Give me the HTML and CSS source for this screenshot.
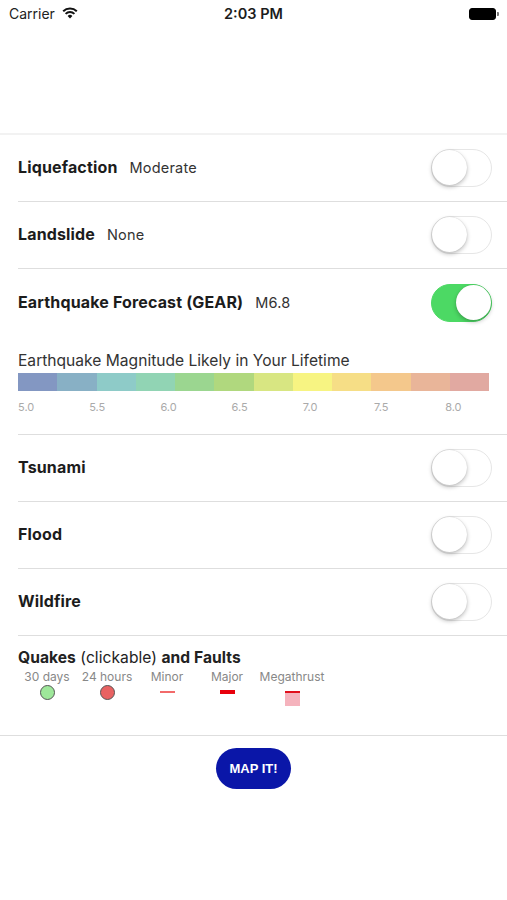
FILE: index.html
```html
<!DOCTYPE html>
<html lang="en">
<head>
  <meta charset="UTF-8">
  <meta name="viewport" content="width=device-width, initial-scale=1.0">
  <title>Hazards</title>
  <link rel="stylesheet" href="styles.css">
</head>
<body>
  <!-- status bar -->
  <div class="statusbar">
    <div class="carrier">Carrier
      <svg class="wifi" width="16" height="12" viewBox="0 0 16 12">
        <path d="M8 11.5 L5.6 8.9 A3.5 3.5 0 0 1 10.4 8.9 Z" fill="#111"/>
        <path d="M3.6 6.9 A6.3 6.3 0 0 1 12.4 6.9" fill="none" stroke="#111" stroke-width="2"/>
        <path d="M1.2 4.3 A9.8 9.8 0 0 1 14.8 4.3" fill="none" stroke="#111" stroke-width="2"/>
      </svg>
    </div>
    <div class="clock">2:03 PM</div>
    <div class="battery"><span class="battery-fill"></span><span class="battery-tip"></span></div>
  </div>

  <div class="header"></div>

  <div class="row">
    <div class="label"><b>Liquefaction</b><span class="value">Moderate</span></div>
    <span class="toggle"><span class="knob"></span></span>
  </div>
  <div class="row">
    <div class="label"><b>Landslide</b><span class="value">None</span></div>
    <span class="toggle"><span class="knob"></span></span>
  </div>

  <div class="section">
    <div class="row plain">
      <div class="label"><b>Earthquake Forecast (GEAR)</b><span class="value">M6.8</span></div>
      <span class="toggle on"><span class="knob"></span></span>
    </div>
    <div class="scale">
      <div class="scale-title">Earthquake Magnitude Likely in Your Lifetime</div>
      <div class="scale-bar">
        <span style="background:#8397c2"></span>
        <span style="background:#88b0c5"></span>
        <span style="background:#8ecbc8"></span>
        <span style="background:#91d4b4"></span>
        <span style="background:#9bd690"></span>
        <span style="background:#b0d87e"></span>
        <span style="background:#d8e682"></span>
        <span style="background:#f7f482"></span>
        <span style="background:#f6de86"></span>
        <span style="background:#f4c88c"></span>
        <span style="background:#e9b599"></span>
        <span style="background:#e1a9a1"></span>
      </div>
      <div class="scale-labels">
        <span>5.0</span><span>5.5</span><span>6.0</span><span>6.5</span><span>7.0</span><span>7.5</span><span>8.0</span>
      </div>
    </div>
  </div>

  <div class="row">
    <div class="label"><b>Tsunami</b></div>
    <span class="toggle"><span class="knob"></span></span>
  </div>
  <div class="row">
    <div class="label"><b>Flood</b></div>
    <span class="toggle"><span class="knob"></span></span>
  </div>
  <div class="row">
    <div class="label"><b>Wildfire</b></div>
    <span class="toggle"><span class="knob"></span></span>
  </div>

  <div class="quakes">
    <div class="quakes-title"><b>Quakes</b> (clickable) <b>and Faults</b></div>
    <div class="legend">
      <div class="legend-item"><span>30 days</span><i class="dot green"></i></div>
      <div class="legend-item"><span>24 hours</span><i class="dot red"></i></div>
      <div class="legend-item"><span>Minor</span><i class="fault minor"></i></div>
      <div class="legend-item"><span>Major</span><i class="fault major"></i></div>
      <div class="legend-item wide"><span>Megathrust</span><i class="fault mega"></i></div>
    </div>
  </div>

  <div class="actions">
    <button class="map-btn">MAP IT!</button>
  </div>
</body>
</html>
```

FILE: styles.css
```css
body { margin: 0; font-family: Inter, "Liberation Sans", sans-serif; color: #1c1c1c; background: #fff; }

.statusbar { height: 27px; display: flex; align-items: center; justify-content: space-between; padding: 0 8px 0 9px; font-size: 14px; position: relative; }
.carrier { display: flex; align-items: center; gap: 7px; color: #222; }
.wifi { margin-top: -2px; }
.clock { position: absolute; left: 0; right: 0; text-align: center; font-weight: 600; font-size: 14.5px; pointer-events: none; }
.battery { display: flex; align-items: center; }
.battery-fill { width: 25px; height: 10px; background: #000; border: 1.5px solid #000; border-radius: 3px; }
.battery-tip { width: 2px; height: 4px; background: #777; border-radius: 0 1px 1px 0; margin-left: 1px; }

.header { height: 106px; border-bottom: 2px solid #f2f2f2; }

.row { height: 66px; margin-left: 18px; padding-right: 15px; display: flex; align-items: center; justify-content: space-between; border-bottom: 1px solid #dedede; }
.row.plain { border-bottom: none; height: 67px; }
.label { font-size: 16px; letter-spacing: 0.15px; display: flex; align-items: baseline; margin-top: -2px; }
.label b { font-weight: 700; }
.value { font-size: 14.5px; margin-left: 12px; color: #333; font-weight: 400; letter-spacing: 0.2px; }

.toggle { width: 59px; height: 36px; border-radius: 19px; border: 1.5px solid #e6e6e6; background: #fff; position: relative; display: block; }
.toggle .knob { position: absolute; top: 0; left: 0; width: 35px; height: 35px; border-radius: 50%; background: #fff; box-shadow: 0 2px 4px rgba(0,0,0,0.25), 0 0 1px rgba(0,0,0,0.2); }
.toggle.on { background: #4cd964; border-color: #4cd964; }
.toggle.on .knob { left: auto; right: 0; }

.section { margin-left: 18px; border-bottom: 1px solid #dedede; }
.section .row { margin-left: 0; }
.scale { padding: 15px 18px 0 0; box-sizing: border-box; height: 98px; }
.scale-title { font-size: 15.6px; color: #333; }
.scale-bar { display: flex; height: 18px; margin-top: 3px; }
.scale-bar span { flex: 1; }
.scale-labels { display: flex; margin-top: 9px; font-size: 11px; color: #aaa; }
.scale-labels span { flex: none; width: 71.2px; }

.quakes { height: 100px; border-bottom: 1px solid #dedede; padding-left: 18px; box-sizing: border-box; }
.quakes-title { font-size: 15.6px; padding-top: 12px; color: #222; letter-spacing: 0.05px; }
.legend { display: flex; margin: 2px 0 0 -1px; }
.legend-item { width: 60px; display: flex; flex-direction: column; align-items: center; font-size: 12px; color: #888; }
.legend-item.wide { width: 70px; }
.dot { width: 13px; height: 13px; border-radius: 50%; border: 1px solid #555; margin-top: 1px; }
.dot.green { background: #9ee79a; }
.dot.red { background: #e86262; }
.fault { display: block; width: 15px; margin-top: 6px; }
.fault.minor { height: 2px; background: #f26a6a; margin-top: 7px; }
.fault.major { height: 4px; background: #e8000c; margin-top: 6px; }
.fault.mega { height: 13px; background: #f5b3bd; border-top: 2px solid #e0101c; margin-top: 7px; }

.actions { display: flex; justify-content: center; padding-top: 12px; }
.map-btn { background: #0a16a8; color: #fff; border: none; width: 75px; height: 41px; border-radius: 21px; font-family: "Liberation Sans", sans-serif; font-weight: 700; font-size: 13px; cursor: pointer; }
```
